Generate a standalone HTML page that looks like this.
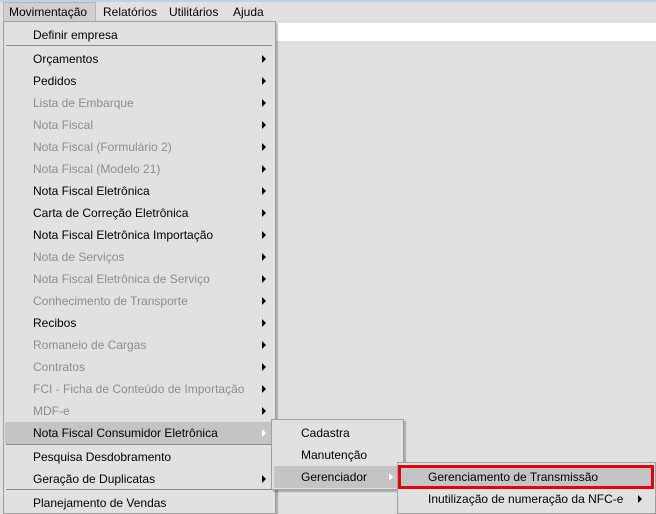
<!DOCTYPE html>
<html style="width:656px;height:514px;overflow:hidden"><head><meta charset="utf-8"><style>
*{margin:0;padding:0;box-sizing:border-box}
body{width:656px;height:514px;overflow:hidden;background:#e1e1e1;font-family:"Liberation Sans",sans-serif;font-size:12px;color:#000;position:relative}
.a{position:absolute}
.t{position:absolute;white-space:nowrap;line-height:14px}
.d{color:#8d8d8d}
.arr{position:absolute;width:0;height:0;border-top:4px solid transparent;border-bottom:4px solid transparent;border-left:4px solid #000}
.sep{position:absolute;height:1px;background:#8a8a8a}
.menu{position:absolute;background:#e1e1e1;border:1px solid #a0a0a0;box-shadow:2px 2px 1px rgba(0,0,0,.25)}
</style></head><body>
<div class="a" style="left:0;top:0;width:656px;height:2px;background:#c6cfdf"></div>
<div class="a" style="left:3px;top:2px;width:93px;height:20px;background:#cfcfcf;border:1px solid #b5b5b5"></div>
<div class="t" style="left:9px;top:5px">Movimentação</div>
<div class="t" style="left:103px;top:5px">Relatórios</div>
<div class="t" style="left:169px;top:5px">Utilitários</div>
<div class="t" style="left:233px;top:5px">Ajuda</div>
<div class="a" style="left:275px;top:23px;width:381px;height:18px;background:#fff"></div>

<div class="menu" style="left:3px;top:21px;width:273px;height:493px"></div>
<div class="sep" style="left:6px;top:45px;width:266px"></div>
<div class="sep" style="left:6px;top:444px;width:266px"></div>
<div class="sep" style="left:6px;top:489px;width:266px"></div>
<div class="a" style="left:5px;top:422px;width:268px;height:22px;background:#c4c4c4"></div>

<div class="t" style="left:33px;top:28px">Definir empresa</div>
<div class="t" style="left:33px;top:52px">Orçamentos</div><div class="arr" style="left:262px;top:55px"></div>
<div class="t" style="left:33px;top:74px">Pedidos</div><div class="arr" style="left:262px;top:77px"></div>
<div class="t d" style="left:33px;top:96px">Lista de Embarque</div><div class="arr" style="left:262px;top:99px"></div>
<div class="t d" style="left:33px;top:118px">Nota Fiscal</div><div class="arr" style="left:262px;top:121px"></div>
<div class="t d" style="left:33px;top:140px">Nota Fiscal (Formulário 2)</div><div class="arr" style="left:262px;top:143px"></div>
<div class="t d" style="left:33px;top:162px">Nota Fiscal (Modelo 21)</div><div class="arr" style="left:262px;top:165px"></div>
<div class="t" style="left:33px;top:184px">Nota Fiscal Eletrônica</div><div class="arr" style="left:262px;top:187px"></div>
<div class="t" style="left:33px;top:206px">Carta de Correção Eletrônica</div><div class="arr" style="left:262px;top:209px"></div>
<div class="t" style="left:33px;top:228px">Nota Fiscal Eletrônica Importação</div><div class="arr" style="left:262px;top:231px"></div>
<div class="t d" style="left:33px;top:250px">Nota de Serviços</div><div class="arr" style="left:262px;top:253px"></div>
<div class="t d" style="left:33px;top:272px">Nota Fiscal Eletrônica de Serviço</div><div class="arr" style="left:262px;top:275px"></div>
<div class="t d" style="left:33px;top:294px">Conhecimento de Transporte</div><div class="arr" style="left:262px;top:297px"></div>
<div class="t" style="left:33px;top:316px">Recibos</div><div class="arr" style="left:262px;top:319px"></div>
<div class="t d" style="left:33px;top:338px">Romaneio de Cargas</div><div class="arr" style="left:262px;top:341px"></div>
<div class="t d" style="left:33px;top:360px">Contratos</div><div class="arr" style="left:262px;top:363px"></div>
<div class="t d" style="left:33px;top:382px">FCI - Ficha de Conteúdo de Importação</div><div class="arr" style="left:262px;top:385px"></div>
<div class="t d" style="left:33px;top:404px">MDF-e</div><div class="arr" style="left:262px;top:407px"></div>
<div class="t" style="left:33px;top:426px">Nota Fiscal Consumidor Eletrônica</div><div class="arr" style="left:262px;top:429px;border-left-color:#fff"></div>
<div class="t" style="left:33px;top:450px">Pesquisa Desdobramento</div>
<div class="t" style="left:33px;top:472px">Geração de Duplicatas</div><div class="arr" style="left:262px;top:475px"></div>
<div class="t" style="left:33px;top:496px">Planejamento de Vendas</div>

<div class="menu" style="left:271px;top:419px;width:133px;height:71px"></div>
<div class="a" style="left:274px;top:466px;width:126px;height:22px;background:#c4c4c4"></div>
<div class="t" style="left:301px;top:426px">Cadastra</div>
<div class="t" style="left:301px;top:448px">Manutenção</div>
<div class="t" style="left:301px;top:470px">Gerenciador</div><div class="arr" style="left:389px;top:473px;border-left-color:#fff"></div>

<div class="menu" style="left:397px;top:462px;width:259px;height:52px"></div>
<div class="a" style="left:398px;top:465px;width:256px;height:24px;background:#c4c4c4;border:3px solid #e8000b"></div>
<div class="t" style="left:428px;top:470px">Gerenciamento de Transmissão</div>
<div class="t" style="left:428px;top:492px">Inutilização de numeração da NFC-e</div><div class="arr" style="left:638px;top:495px"></div>
</body></html>
